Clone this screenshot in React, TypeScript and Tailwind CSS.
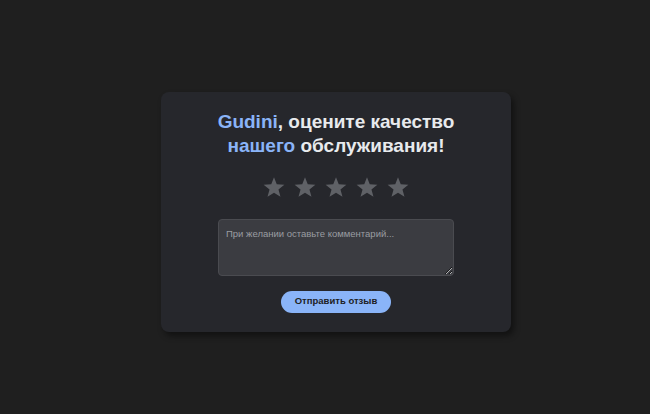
import React from "react";

const Star = () => (
  <svg width="24" height="24" viewBox="0 0 24 24" className="block">
    <path
      d="M12 2.2l2.76 7.1 7.6.38-5.9 4.8 2.02 7.34L12 17.66 5.52 21.82l2.02-7.34-5.9-4.8 7.6-.38z"
      fill="#5f6166"
    />
  </svg>
);

export default function App() {
  return (
    <div
      className="w-[650px] h-[414px] bg-[#1f1f1f] flex items-center justify-center"
      style={{ fontFamily: '"Liberation Sans", Arial, sans-serif' }}
    >
      <div className="w-[350px] ml-[22px] mt-[9px] bg-[#26272c] rounded-[8px] shadow-[3px_4px_6px_rgba(0,0,0,0.45)] flex flex-col items-center pt-[18px] pb-[19px]">
        <h1 className="text-[19px] font-bold leading-[24px] text-center text-[#e8eaed]">
          <span className="text-[#8ab4f8]">Gudini</span>, оцените качество
          <br />
          <span className="text-[#8ab4f8]">нашего</span> обслуживания!
        </h1>
        <div className="flex gap-[7px] mt-[17px]">
          <Star />
          <Star />
          <Star />
          <Star />
          <Star />
        </div>
        <textarea
          placeholder="При желании оставьте комментарий..."
          className="mt-[20px] w-[236px] h-[57px] bg-[#3b3c41] border border-[#4a4b50] rounded-[4px] px-[7px] py-[7px] text-[9.5px] text-[#e8eaed] placeholder:text-[#9a9ca1] outline-none resize-y"
          style={{ fontFamily: '"Liberation Sans", Arial, sans-serif' }}
        />
        <button className="mt-[15px] w-[110px] h-[22px] rounded-full bg-[#8ab4f8] text-[9.5px] font-bold text-[#202124]">
          Отправить отзыв
        </button>
      </div>
    </div>
  );
}
